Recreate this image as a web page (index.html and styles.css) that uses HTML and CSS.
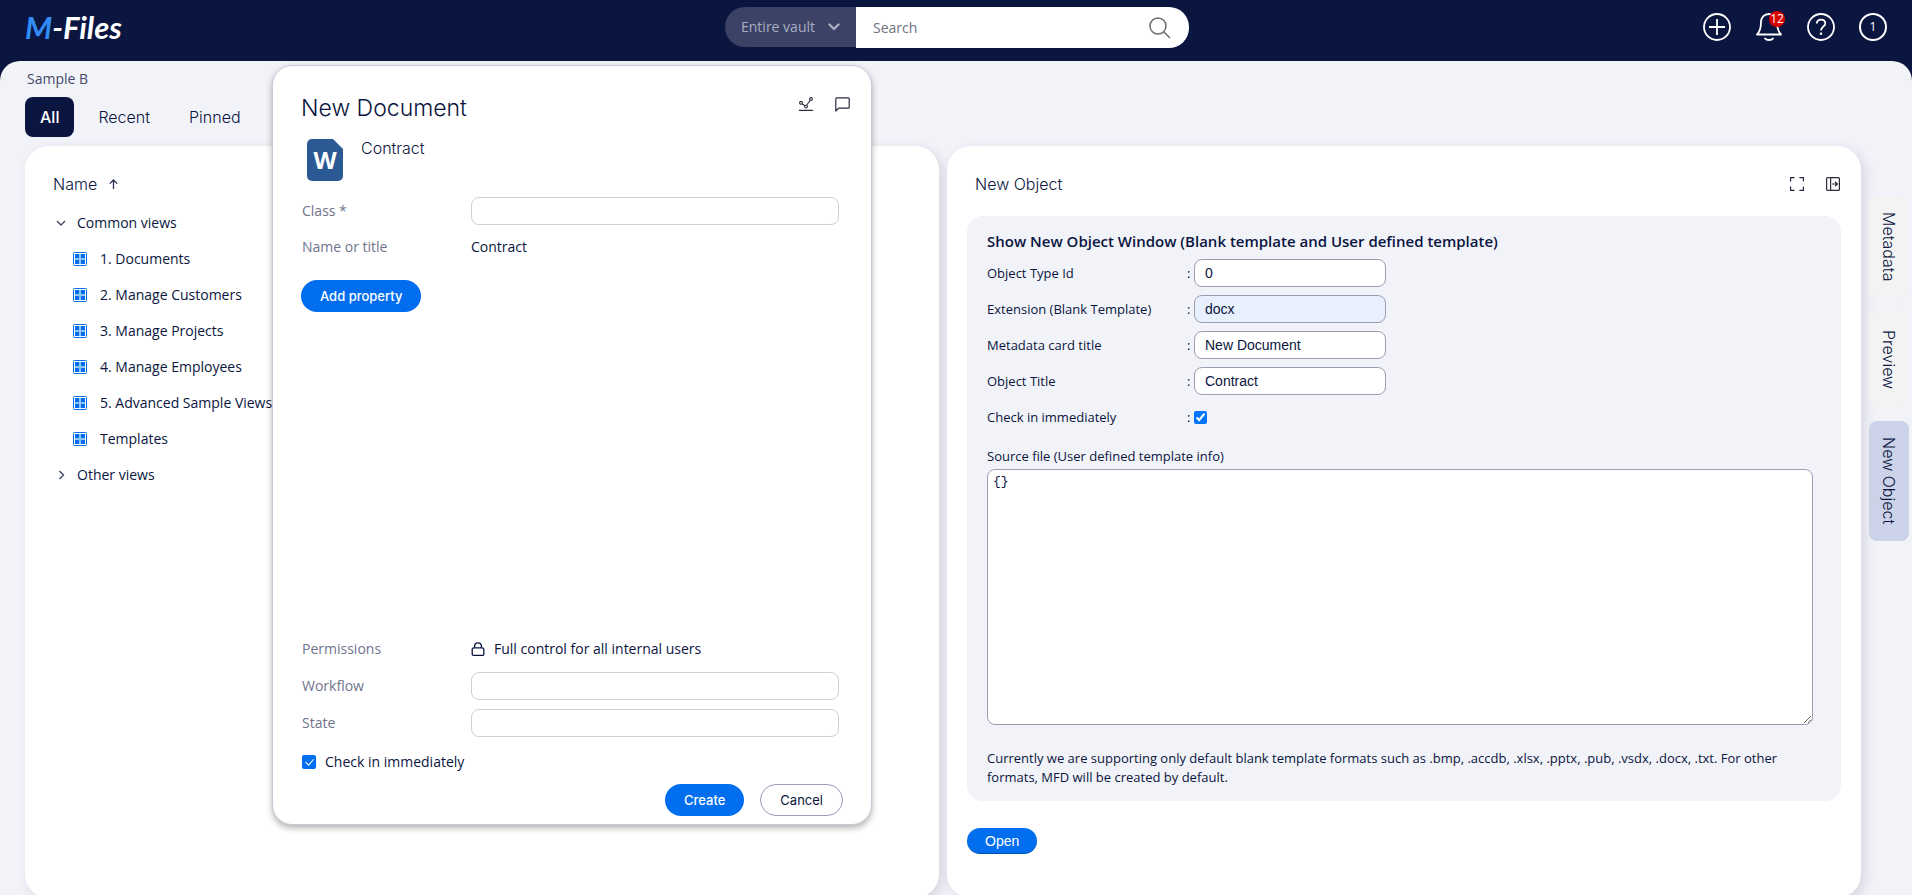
FILE: index.html
```html
<!DOCTYPE html>
<html lang="en">
<head>
<meta charset="utf-8">
<meta name="viewport" content="width=device-width, initial-scale=1">
<title>M-Files</title>
<link rel="stylesheet" href="styles.css">
</head>
<body>
<svg class="defs" aria-hidden="true">
  <symbol id="view" viewBox="0 0 14 14">
    <rect x=".5" y=".5" width="13" height="13" rx="1" fill="#fff" stroke="#006eef"/>
    <rect x="2" y="2" width="10" height="10" fill="#8fc2fb"/>
    <path d="M2 2h4v4H2zM8 2h4v4H8zM2 8h4v4H2zM8 8h4v4H8z" fill="#006eef"/>
  </symbol>
</svg>

<header class="topbar">
  <a class="logo" href="#"><span class="logo-m">M</span>-Files</a>
  <form class="search" role="search">
    <div class="scope">
      <select class="scope-select" aria-label="Search scope"><option>Entire vault</option></select>
      <svg class="scope-chevron" viewBox="0 0 12 8"><path d="M1.500 1.500 6 6l4.500-4.500" fill="none" stroke="#a9adc0" stroke-width="2.400" stroke-linecap="round" stroke-linejoin="round"/></svg>
    </div>
    <div class="query">
      <input class="query-input" type="text" placeholder="Search" aria-label="Search">
      <button class="icon-button" type="button" aria-label="Run search">
        <svg width="22" height="22" viewBox="0 0 22 22" fill="none" stroke="#6b6b6b" stroke-width="1.500"><circle cx="9" cy="9" r="8"/><path d="m14.500 14.500 6.500 6.500"/></svg>
      </button>
    </div>
  </form>
  <nav class="actions" aria-label="Account">
    <button class="icon-button" type="button" aria-label="Create">
      <svg width="28" height="28" viewBox="0 0 28 28" fill="none" stroke="#fff" stroke-width="1.800"><circle cx="14" cy="14" r="13"/><path d="M14 6v16M6 14h16"/></svg>
    </button>
    <button class="icon-button bell" type="button" aria-label="Notifications">
      <svg width="28" height="28" viewBox="0 0 28 28" fill="none" stroke="#fff" stroke-width="1.800" stroke-linejoin="round" stroke-linecap="round"><path d="M14 1C9 1 6 4.500 6 9c0 6-1.500 10-4 12.500h24C23.500 19 22 15 22 9c0-4.500-3-8-8-8z"/><path d="M10 25.500c1.500 2 6.500 2 8 0"/></svg>
      <span class="badge">12</span>
    </button>
    <button class="icon-button" type="button" aria-label="Help">
      <svg width="28" height="28" viewBox="0 0 28 28" fill="none" stroke="#fff" stroke-width="1.800"><circle cx="14" cy="14" r="13"/><path d="M9.800 10.500c0-2.500 1.700-3.900 4.200-3.900s4.300 1.500 4.300 3.800c0 3.200-4.300 3-4.300 7.100"/><path d="M14 19.600v2.200" stroke-width="2.200"/></svg>
    </button>
    <button class="user" type="button" aria-label="User 1">1</button>
  </nav>
</header>

<div class="workspace">
  <div class="content">
    <p class="vault">Sample B</p>
    <nav class="tabs" aria-label="Views">
      <button class="tab tab-active" type="button">All</button>
      <button class="tab" type="button">Recent</button>
      <button class="tab" type="button">Pinned</button>
    </nav>
    <div class="panes">
      <main class="card listing">
        <h2 class="list-head">Name
          <svg width="9" height="10" viewBox="0 0 9 10" fill="none" stroke="#2d3355" stroke-width="1.300"><path d="M4.500 10V1M.8 4.600 4.500 1l3.700 3.600"/></svg>
        </h2>
        <button class="group" type="button"><svg width="12" height="12" viewBox="0 0 12 12" fill="none" stroke="#3b4266" stroke-width="1.300"><path d="m2 4 4 4 4-4"/></svg>Common views</button>
        <ul class="views">
          <li><a class="view" href="#"><svg width="14" height="14"><use href="#view"/></svg>1. Documents</a></li>
          <li><a class="view" href="#"><svg width="14" height="14"><use href="#view"/></svg>2. Manage Customers</a></li>
          <li><a class="view" href="#"><svg width="14" height="14"><use href="#view"/></svg>3. Manage Projects</a></li>
          <li><a class="view" href="#"><svg width="14" height="14"><use href="#view"/></svg>4. Manage Employees</a></li>
          <li><a class="view" href="#"><svg width="14" height="14"><use href="#view"/></svg>5. Advanced Sample Views</a></li>
          <li><a class="view" href="#"><svg width="14" height="14"><use href="#view"/></svg>Templates</a></li>
        </ul>
        <button class="group" type="button"><svg width="12" height="12" viewBox="0 0 12 12" fill="none" stroke="#3b4266" stroke-width="1.300"><path d="m4.500 2 4 4-4 4"/></svg>Other views</button>
      </main>

      <section class="card details">
        <div class="details-head">
          <h2 class="details-title">New Object</h2>
          <div class="details-tools">
            <button class="icon-button" type="button" aria-label="Full screen"><svg width="14" height="14" viewBox="0 0 14 14" fill="none" stroke="#222a45" stroke-width="1.200"><path d="M.6 4.600v-4h4M9.400.6h4v4M13.400 9.400v4h-4M4.600 13.400h-4v-4"/></svg></button>
            <button class="icon-button" type="button" aria-label="Collapse pane"><svg width="14" height="14" viewBox="0 0 14 14" fill="none" stroke="#2b2b3d" stroke-width="1.200"><rect x=".6" y=".6" width="12.800" height="12.800" rx="1"/><path d="M4.600.6v12.800M6 7h5.500M9 4.800 11.400 7 9 9.200"/></svg></button>
          </div>
        </div>
        <form class="panel">
          <h3 class="panel-title">Show New Object Window (Blank template and User defined template)</h3>
          <div class="row"><label class="row-label" for="type">Object Type Id</label><span class="colon">:</span><input class="field" id="type" type="text" value="0"></div>
          <div class="row"><label class="row-label" for="ext">Extension (Blank Template)</label><span class="colon">:</span><input class="field field-filled" id="ext" type="text" value="docx"></div>
          <div class="row"><label class="row-label" for="cardtitle">Metadata card title</label><span class="colon">:</span><input class="field" id="cardtitle" type="text" value="New Document"></div>
          <div class="row"><label class="row-label" for="objtitle">Object Title</label><span class="colon">:</span><input class="field" id="objtitle" type="text" value="Contract"></div>
          <div class="row"><label class="row-label" for="checkin">Check in immediately</label><span class="colon">:</span><input class="native-check" id="checkin" type="checkbox" checked></div>
          <label class="source-label" for="source">Source file (User defined template info)</label>
          <textarea class="source" id="source" spellcheck="false">{}</textarea>
          <p class="note">Currently we are supporting only default blank template formats such as .bmp, .accdb, .xlsx, .pptx, .pub, .vsdx, .docx, .txt. For other formats, MFD will be created by default.</p>
        </form>
        <button class="open" type="button">Open</button>
      </section>
    </div>
  </div>

  <nav class="side" aria-label="Panes">
    <button class="side-tab" type="button">Metadata</button>
    <button class="side-tab" type="button">Preview</button>
    <button class="side-tab side-tab-active" type="button">New Object</button>
  </nav>
</div>

<form class="dialog" role="dialog" aria-labelledby="dialog-title">
  <div class="dialog-head">
    <h1 class="dialog-title" id="dialog-title">New Document</h1>
    <div class="dialog-tools">
      <button class="icon-button" type="button" aria-label="Workflow"><svg width="14" height="14" viewBox="0 0 14 14" fill="none" stroke="#2b2b3d" stroke-width="1.100"><circle cx="2" cy="5.800" r="1.400"/><circle cx="7" cy="9.600" r="1.400"/><circle cx="12" cy="2" r="1.400"/><path d="m3.100 6.700 2.800 2M7.600 8.300l3.700-5.100M0 13.400h14"/></svg></button>
      <button class="icon-button" type="button" aria-label="Comments"><svg width="15" height="15" viewBox="0 0 15 15" fill="none" stroke="#2b2b3d" stroke-width="1.200" stroke-linejoin="round"><path d="M.8 14V1.800a1 1 0 0 1 1-1h11.400a1 1 0 0 1 1 1v8.400a1 1 0 0 1-1 1H3.600z"/></svg></button>
    </div>
  </div>
  <div class="object">
    <svg class="word" width="36" height="42" viewBox="0 0 36 42"><path d="M5 0h21l10 10v27a5 5 0 0 1-5 5H5a5 5 0 0 1-5-5V5a5 5 0 0 1 5-5z" fill="#2b5993"/><text class="word-letter" x="18" y="30" text-anchor="middle">W</text></svg>
    <span class="object-name">Contract</span>
  </div>
  <div class="prop"><label class="prop-label" for="class">Class *</label><input class="prop-input" id="class" type="text"></div>
  <div class="prop"><span class="prop-label">Name or title</span><span class="prop-value">Contract</span></div>
  <button class="pill pill-primary add" type="button">Add property</button>
  <div class="dialog-foot">
    <div class="prop"><span class="prop-label">Permissions</span><span class="prop-value perm"><svg width="14" height="14" viewBox="0 0 14 14" fill="none" stroke="#0a1540" stroke-width="1.300"><rect x="1.200" y="5.800" width="11.600" height="7.600" rx="1.500"/><path d="M3.600 5.800V4.200a3.400 3.400 0 0 1 6.800 0v1.600"/></svg>Full control for all internal users</span></div>
    <div class="prop"><label class="prop-label" for="workflow">Workflow</label><input class="prop-input" id="workflow" type="text"></div>
    <div class="prop"><label class="prop-label" for="state">State</label><input class="prop-input" id="state" type="text"></div>
    <label class="check-row"><input class="check" type="checkbox" checked>Check in immediately</label>
    <div class="buttons">
      <button class="pill pill-primary" type="button">Create</button>
      <button class="pill pill-outline" type="button">Cancel</button>
    </div>
  </div>
</form>
</body>
</html>
```
FILE: styles.css
```css
* { box-sizing: border-box; }

body {
  margin: 0;
  height: 100vh;
  overflow: hidden;
  display: flex;
  flex-direction: column;
  position: relative;
  background: #0a1540;
  color: #0a1540;
  font: 14px/20px "Open Sans", sans-serif;
}

h1, h2, h3, p, ul { margin: 0; padding: 0; font-weight: 400; }
ul { list-style: none; }
button, input, select, textarea { font: inherit; color: inherit; margin: 0; }
button { cursor: pointer; }
svg { display: block; flex: none; }
.defs { position: absolute; width: 0; height: 0; }

.icon-button { padding: 0; border: 0; background: none; }

/* Top bar */
.topbar {
  flex: none;
  height: 61px;
  padding: 7px 25px 0;
  display: grid;
  grid-template-columns: 700px 464px 1fr;
  align-items: start;
}
.logo {
  padding-top: 4px;
  font: italic 700 31px/32px Lato, sans-serif;
  color: #fff;
  text-decoration: none;
}
.logo-m { color: #318cf5; }
.search { display: flex; align-items: flex-start; }
.scope { position: relative; width: 131px; }
.scope-select {
  width: 100%;
  height: 40px;
  padding: 0 16px;
  border: 0;
  border-radius: 20px 0 0 20px;
  background: #3b4266;
  color: #a9adc0;
  appearance: none;
}
.scope-chevron { position: absolute; right: 16px; top: 16px; width: 12px; height: 8px; pointer-events: none; }
.query {
  flex: 1;
  height: 41px;
  padding: 0 18px 0 17px;
  display: flex;
  align-items: center;
  background: #fff;
  border-radius: 0 20px 20px 0;
}
.query-input { flex: 1; min-width: 0; padding: 0; border: 0; outline: 0; background: none; }
.query-input::placeholder { color: #6f7282; opacity: 1; }
.actions { display: flex; justify-content: flex-end; gap: 24px; padding-top: 6px; }
.bell { position: relative; }
.badge {
  position: absolute;
  left: 14px;
  top: -2px;
  width: 16px;
  height: 16px;
  border-radius: 8px;
  background: #d60000;
  color: #fff;
  font-size: 12px;
  line-height: 16px;
  text-align: center;
}
.user {
  width: 28px;
  height: 28px;
  padding: 0;
  border: 2px solid #fff;
  border-radius: 50%;
  background: none;
  color: #fff;
  font-size: 12px;
  line-height: 20px;
}

/* Workspace */
.workspace {
  flex: 1;
  min-height: 0;
  display: flex;
  gap: 8px;
  padding: 8px 3px 0 25px;
  background: #f2f3f9;
  border-radius: 20px 20px 0 0;
}
.content { flex: 1; min-width: 0; display: flex; flex-direction: column; }
.vault { padding-left: 2px; color: #444968; font-weight: 500; }
.tabs { display: flex; gap: 9px; padding: 8px 0 9px; }
.tab {
  height: 40px;
  padding: 0 15px;
  border: 0;
  border-radius: 8px;
  background: none;
  font: 300 16px/20px Inter, sans-serif;
}
.tab-active { background: #0a1540; color: #fff; font-weight: 500; }
.panes { flex: 1; min-height: 0; display: grid; grid-template-columns: 1fr 1fr; gap: 8px; margin-bottom: -3px; }
.card { background: #fff; border-radius: 24px; box-shadow: 4px 4px 12px rgba(40, 44, 80, .14); }

.listing { padding: 28px; }
.list-head { display: flex; align-items: center; gap: 12px; font: 300 16px/20px Inter, sans-serif; margin-bottom: 11px; }
.group, .view { height: 36px; display: flex; align-items: center; color: #0a1540; }
.group { padding: 0 2px; gap: 10px; border: 0; background: none; }
.view { padding-left: 20px; gap: 13px; text-decoration: none; }

.details { padding: 28px 20px 0; }
.details-head { display: flex; align-items: center; justify-content: space-between; padding-left: 8px; }
.details-title { font: 300 16px/20px Inter, sans-serif; }
.details-tools { display: flex; gap: 22px; padding-right: 1px; }
.panel {
  margin-top: 22px;
  padding: 14px 28px 14px 20px;
  background: #f2f3f9;
  border-radius: 16px;
  font-size: 13px;
}
.panel-title { font-size: 15px; font-weight: 600; line-height: 22px; margin-bottom: 3px; }
.row { height: 36px; display: flex; align-items: center; }
.row-label { width: 200px; }
.colon { width: 7px; }
.field {
  width: 192px;
  height: 28px;
  padding: 0 10px;
  border: 1px solid #9c9cb5;
  border-radius: 8px;
  background: #fff;
  font: 14px/20px "Liberation Sans", Arial, sans-serif;
}
.field-filled { background: #e8f0fe; }
.native-check { width: 13px; height: 13px; accent-color: #0075ff; }
.source-label { display: block; margin-top: 11px; }
.source {
  display: block;
  width: 100%;
  height: 256px;
  margin-top: 3px;
  padding: 2px 5px;
  border: 1px solid #9c9cb5;
  border-radius: 8px;
  background: #fff;
  font: 13px/20px "Liberation Mono", monospace;
  resize: both;
}
.note { margin-top: 24px; line-height: 19px; }
.open {
  display: block;
  height: 26px;
  margin-top: 27px;
  padding: 0 18px;
  border: 0;
  border-bottom: 1px solid #004fab;
  border-radius: 13px;
  background: #006eef;
  color: #fff;
  font: 14px/20px "Liberation Sans", Arial, sans-serif;
}

.side { width: 40px; padding-top: 127px; display: flex; flex-direction: column; gap: 14px; }
.side-tab {
  width: 40px;
  min-height: 96px;
  padding: 16px 0;
  border: 0;
  border-radius: 8px;
  background: #f3f3f4;
  font: 300 16px/20px Inter, sans-serif;
  writing-mode: vertical-rl;
}
.side-tab-active { background: #ccd2e8; }

/* New document dialog */
.dialog {
  position: absolute;
  left: 272px;
  top: 65px;
  width: 600px;
  height: 760px;
  padding: 27px 28px 8px;
  display: flex;
  flex-direction: column;
  background: #fff;
  border: 1px solid #c9c9d8;
  border-radius: 20px;
  box-shadow: 0 3px 6px rgba(0, 0, 0, .3);
}
.dialog-head { display: flex; justify-content: space-between; }
.dialog-title { font: 300 23px/30px Inter, sans-serif; }
.dialog-tools { display: flex; align-items: flex-start; gap: 22px; padding: 4px 0; margin-right: -7px; }
.object { display: flex; gap: 18px; padding: 15px 6px 12px; }
.word { margin-top: 1px; }
.word-letter { font: 700 24px "Open Sans", sans-serif; fill: #fff; }
.object-name { font: 300 16px/20px Inter, sans-serif; }
.prop { height: 36px; display: flex; align-items: center; padding-right: 4px; }
.prop-label { width: 170px; padding-left: 1px; color: #6f748c; }
.prop-input {
  flex: 1;
  height: 28px;
  padding: 0 8px;
  border: 1px solid #cfcfdc;
  border-radius: 8px;
  background: #fff;
}
.perm { display: flex; align-items: center; gap: 9px; }
.pill {
  height: 32px;
  padding: 0 19px;
  border: 0;
  border-radius: 16px;
  font: 13px/20px Inter, sans-serif;
}
.pill-primary { background: #006eef; color: #fff; font-weight: 500; }
.pill-outline { background: #fff; border: 1px solid #9c9cb5; }
.add { align-self: flex-start; margin-top: 15px; }
.dialog-foot { margin-top: auto; }
.dialog-foot .prop { height: 37px; }
.check-row { display: flex; align-items: center; gap: 9px; margin: 11px 0 12px; padding-left: 1px; }
.check {
  appearance: none;
  width: 14px;
  height: 14px;
  display: grid;
  place-items: center;
  border-radius: 2px;
  background: #006eef;
}
.check::before {
  content: "";
  width: 4px;
  height: 7px;
  margin-bottom: 2px;
  border: solid #fff;
  border-width: 0 1px 1px 0;
  rotate: 40deg;
}
.buttons { display: flex; justify-content: flex-end; gap: 16px; }
```
